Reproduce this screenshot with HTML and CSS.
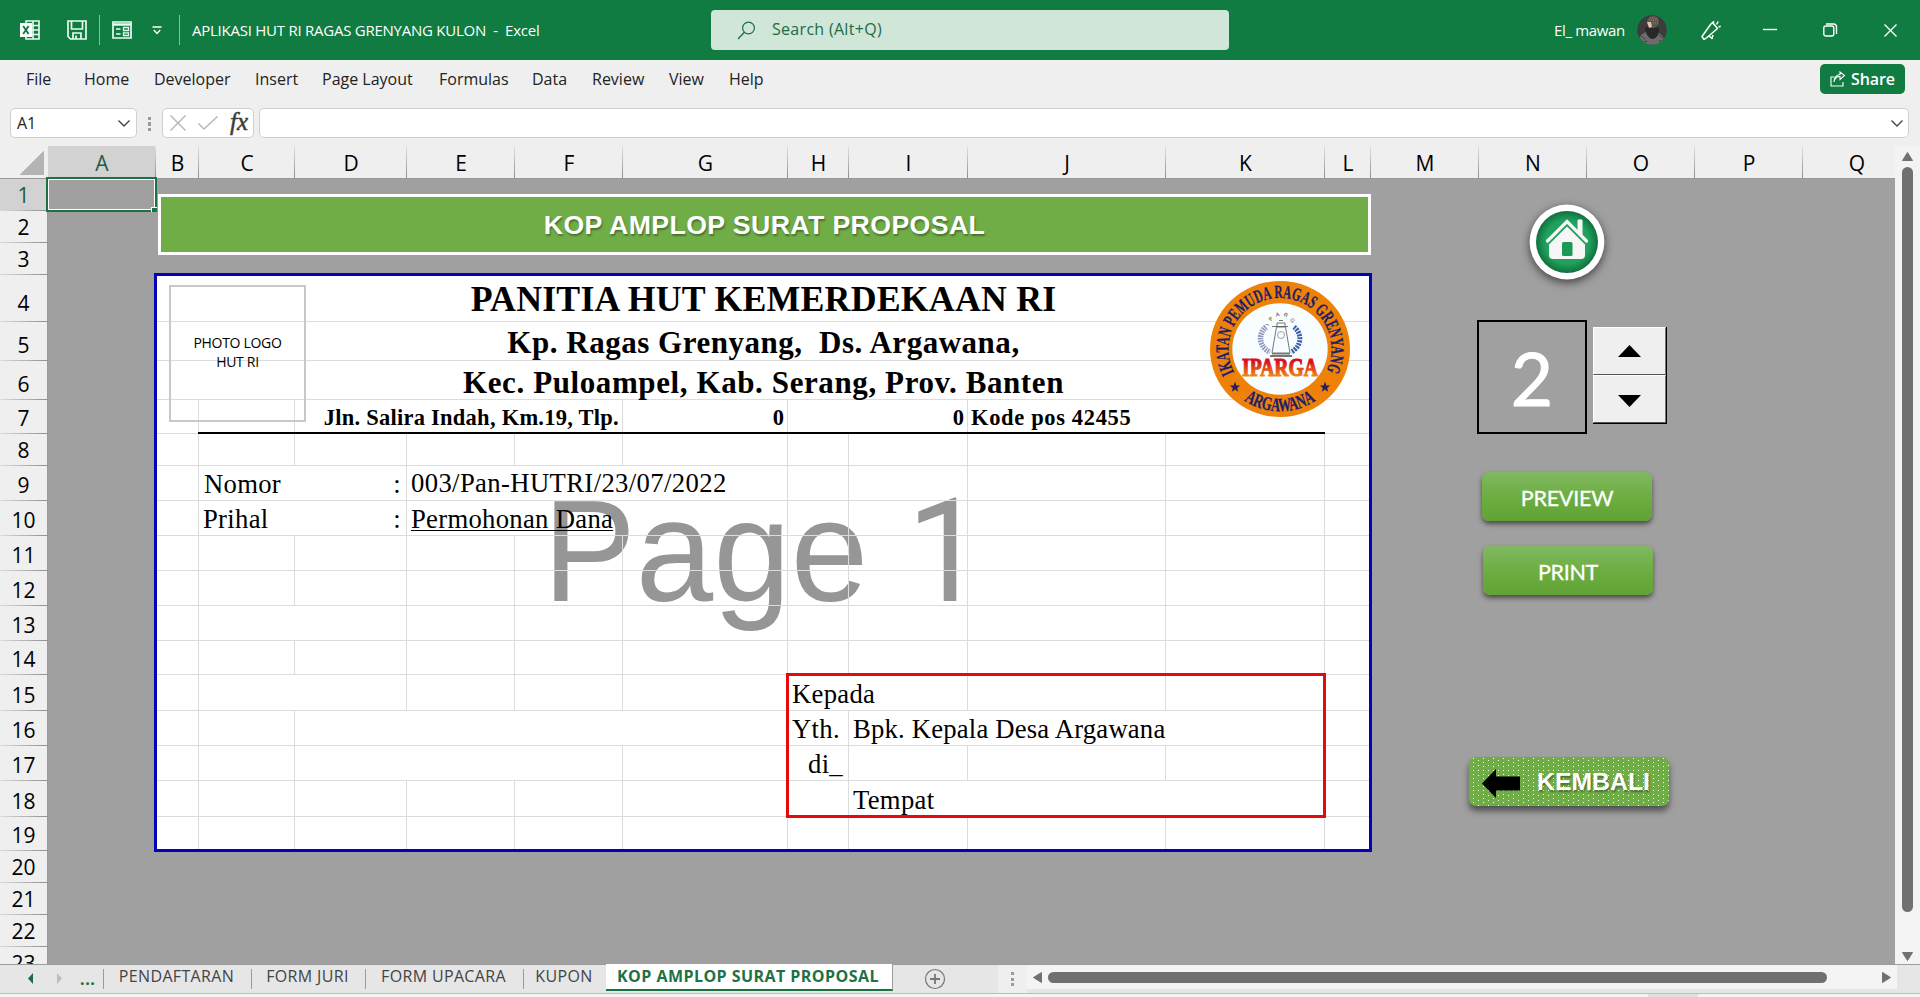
FILE: index.html
```html
<!DOCTYPE html>
<html lang="id">
<head>
<meta charset="utf-8">
<title>APLIKASI HUT RI RAGAS GRENYANG KULON - Excel</title>
<link rel="stylesheet" href="styles.css">
</head>
<body>
<div class="app">
  <header class="titlebar">
    <div class="quick">
      <svg class="ic-excel" width="20" height="20" viewBox="0 0 20 20"><path d="M6 1h13v18H6zM6 5.5h13M6 10h13M6 14.5h13M13 1v18" fill="none" stroke="#e9fbf1" stroke-width="1.6"/><rect x="0" y="3" width="12" height="14" fill="#fff"/><path d="M3.2 6l5.4 8M8.6 6l-5.4 8" stroke="#107c41" stroke-width="1.9"/></svg>
      <svg class="ic-save" width="20" height="20" viewBox="0 0 20 20"><path d="M1 1h18v18H3.5L1 16.500z M4.500 1v8h11V1 M6 19v-6h8v6 M9 15.500v3.500" fill="none" stroke="#e9fbf1" stroke-width="1.7"/></svg>
      <span class="vline"></span>
      <svg class="ic-form" width="20" height="18" viewBox="0 0 20 18"><path d="M1 1h18v16H1z" fill="none" stroke="#e9fbf1" stroke-width="1.7"/><path d="M1 3.500h18" stroke="#e9fbf1" stroke-width="2.500"/><path d="M4 8h4.500M4 13h4.500" stroke="#e9fbf1" stroke-width="1.600"/><path d="M11.500 6.500h5v3h-5zM11.500 11.800h5v2.700h-5z" fill="none" stroke="#e9fbf1" stroke-width="1.300"/></svg>
      <svg class="ic-more" width="10" height="9" viewBox="0 0 10 9"><path d="M.5 1h9M1.800 4l3.200 3.400L8.200 4" fill="none" stroke="#fff" stroke-width="1.400"/></svg>
      <span class="vline"></span>
      <span class="doc-title">APLIKASI HUT RI RAGAS GRENYANG KULON  -  Excel</span>
    </div>
    <div class="search">
      <svg width="19" height="19" viewBox="0 0 19 19"><circle cx="11.500" cy="7" r="5.900" fill="none" stroke="#1e6b43" stroke-width="1.200"/><path d="M7.400 11.300L1 18" stroke="#1e6b43" stroke-width="1.300"/></svg>
      <span>Search (Alt+Q)</span>
    </div>
    <div class="account">
      <span class="user">El_ mawan</span>
      <svg class="avatar" width="30" height="30" viewBox="0 0 30 30"><defs><clipPath id="av"><circle cx="15" cy="15" r="14.700"/></clipPath></defs><g clip-path="url(#av)"><rect width="30" height="30" fill="#3d3b3b"/><path d="M1 30c0-9 4-13 13-14 9 1 14 5 15 14z" fill="#6d6b6e"/><path d="M8 13c1 8 5 11 8 11 4-1 6-5 6-10l-5-6z" fill="#282626"/><circle cx="16" cy="7" r="6" fill="#5e564c"/><path d="M10 7l4 0 1 5-3 1z" fill="#d8c4b5"/><path d="M13 3h7M12 5h9M16 8h5" stroke="#8b8070" stroke-dasharray="1 1"/><path d="M4 21l4 3M20 19l6 4M22 26l5-1M5 27l6-1" stroke="#3a3838" stroke-dasharray="2 1"/></g></svg>
      <svg class="ic-pen" width="20" height="20" viewBox="0 0 20 20"><path d="M1 16.500L9.500 4.500 11.500 2.500 16.500 8.500 6 17.500 3 19.500zM8 16l3 2.500 1-3.500M12.500 3.500V1M15.500 4.500l1.700-3M17.500 7l2.200-.8" fill="none" stroke="#fff" stroke-width="1.500" stroke-linejoin="round"/></svg>
      <svg class="ic-min" width="14" height="14" viewBox="0 0 14 14"><path d="M0 6.500h14" stroke="#fff" stroke-width="1.400"/></svg>
      <svg class="ic-max" width="15" height="14" viewBox="0 0 15 14"><rect x=".8" y="3" width="10" height="10" rx="2" fill="none" stroke="#fff" stroke-width="1.400"/><path d="M3 1h7.500a3 3 0 0 1 3 3v7" fill="none" stroke="#fff" stroke-width="1.400"/></svg>
      <svg class="ic-close" width="13" height="13" viewBox="0 0 13 13"><path d="M.5.5l12 12M12.500.5l-12 12" stroke="#fff" stroke-width="1.400"/></svg>
    </div>
  </header>

  <nav class="ribbon">
    <div class="tabs"><span>File</span><span>Home</span><span>Developer</span><span>Insert</span><span>Page Layout</span><span>Formulas</span><span>Data</span><span>Review</span><span>View</span><span>Help</span></div>
    <button class="share"><svg width="16" height="16" viewBox="0 0 16 16"><path d="M4.500 6H1v9h12v-4M4 11c.6-3.600 3-5.500 6-5.500V8.500l4.500-4L10 1v2.500C6.500 4 4 7 4 11z" fill="none" stroke="#fff" stroke-width="1.100"/></svg>Share</button>
  </nav>

  <div class="formula">
    <div class="namebox"><span>A1</span><svg width="12" height="7" viewBox="0 0 12 7"><path d="M.5.500L6 6l5.500-5.500" fill="none" stroke="#444" stroke-width="1.400"/></svg></div>
    <span class="dots"></span>
    <div class="fx">
      <svg width="16" height="16" viewBox="0 0 16 16"><path d="M.5.500l15 15M15.500.500l-15 15" stroke="#b5b5b5" stroke-width="1.400"/></svg>
      <svg width="20" height="14" viewBox="0 0 20 14"><path d="M.5 7.500l5.500 5.500L19.500.5" fill="none" stroke="#b5b5b5" stroke-width="1.400"/></svg>
      <i>fx</i>
    </div>
    <div class="input"><svg width="12" height="7" viewBox="0 0 12 7"><path d="M.5.500L6 6l5.500-5.500" fill="none" stroke="#444" stroke-width="1.400"/></svg></div>
  </div>

  <main class="work">
    <div class="sheet">
      <div class="corner"></div>
      <div class="ch on">A</div><div class="ch">B</div><div class="ch">C</div><div class="ch">D</div><div class="ch">E</div><div class="ch">F</div><div class="ch">G</div><div class="ch">H</div><div class="ch">I</div><div class="ch">J</div><div class="ch">K</div><div class="ch">L</div><div class="ch">M</div><div class="ch">N</div><div class="ch">O</div><div class="ch">P</div><div class="ch last">Q</div>
      <div class="rh on">1</div><div class="rh">2</div><div class="rh">3</div><div class="rh tall">4</div><div class="rh">5</div><div class="rh">6</div><div class="rh">7</div><div class="rh">8</div><div class="rh">9</div><div class="rh">10</div><div class="rh">11</div><div class="rh">12</div><div class="rh">13</div><div class="rh">14</div><div class="rh">15</div><div class="rh">16</div><div class="rh">17</div><div class="rh">18</div><div class="rh">19</div><div class="rh">20</div><div class="rh">21</div><div class="rh">22</div><div class="rh">23</div>

      <div class="page"><span class="watermark">Page <b>1</b></span>
        <svg class="lines" width="1218" height="579" viewBox="154 273 1218 579"><path fill="none" stroke="#dcdcdc" d="M156 321.500H1370M156 360.500H1370M156 399.500H1370M156 433.500H1370M156 465.500H1370M156 500.500H1370M156 535.500H1370M156 570.500H1370M156 605.500H1370M156 640.500H1370M156 674.500H1370M156 710.500H1370M156 745.500H1370M156 780.500H1370M156 816.500H1370
M198.500 400V850M294.500 400V466M294.500 536V606M294.500 641V675M294.500 711V850M406.500 434V711M406.500 781V850M514.500 434V466M514.500 536V711M514.500 781V850M622.500 400V466M622.500 536V711M622.500 746V850M787.500 400V850M848.500 434V675M848.500 711V850M967.500 400V711M967.500 746V781M967.500 817V850M1165.500 434V711M1165.500 746V781M1165.500 817V850M1324.500 434V850"/></svg>
      </div>

      <div class="cell h1">PANITIA HUT KEMERDEKAAN RI</div>
      <div class="cell h2 r5">Kp. Ragas Grenyang,  Ds. Argawana,</div>
      <div class="cell h2 r6">Kec. Puloampel, Kab. Serang, Prov. Banten</div>
      <div class="cell h3 addr">Jln. Salira Indah, Km.19, Tlp.</div>
      <div class="cell h3 tel1">0</div>
      <div class="cell h3 tel2">0</div>
      <div class="cell h3 pos">Kode pos 42455</div>
      <div class="rule"></div>
      <div class="cell t nomor">Nomor</div><div class="cell t colon r9">:</div><div class="cell t val r9">003/Pan-HUTRI/23/07/2022</div>
      <div class="cell t prihal">Prihal</div><div class="cell t colon r10">:</div><div class="cell t val r10"><u>Permohonan Dana</u></div>
      <div class="redbox"></div>
      <div class="cell t kepada">Kepada</div>
      <div class="cell t yth">Yth.</div><div class="cell t bpk">Bpk. Kepala Desa Argawana</div>
      <div class="cell t di">di_</div>
      <div class="cell t tempat">Tempat</div>

      <div class="select"><i></i></div>
      <div class="banner">KOP AMPLOP SURAT PROPOSAL</div>
      <div class="photo">PHOTO LOGO<br>HUT RI</div>

      <svg class="logo" width="142" height="138" viewBox="-71 -69 142 138">
        <defs>
          <path id="arcTop" d="M-45.800 23.300A51.500 51 0 1 1 45.800 23.300"/>
          <path id="arcBot" d="M-36 51.500A64 62.500 0 0 0 36 51.500"/>
          <path id="arcMini" d="M-11-23A12.500 14 0 0 1 13-23"/>
          <linearGradient id="ipg" x1="0" y1="0" x2="0" y2="1"><stop offset=".3" stop-color="#d8101c"/><stop offset=".8" stop-color="#f08a10"/></linearGradient>
        </defs>
        <ellipse rx="70" ry="68" fill="#ee8208"/>
        <ellipse rx="47.700" ry="45.800" fill="#f8fdff"/>
        <text class="ring" font-size="18.500"><textPath href="#arcTop" textLength="207" lengthAdjust="spacingAndGlyphs">IKATAN PEMUDA RAGAS GRENYANG</textPath></text>
        <text class="ring" font-size="19"><textPath href="#arcBot" textLength="76" lengthAdjust="spacingAndGlyphs">ARGAWANA</textPath></text>
        <path d="M-45 32.500l1.300 4h4l-3.200 2.400 1.200 3.900-3.300-2.400-3.300 2.400 1.200-3.900-3.200-2.400h4z" fill="#211d6b"/>
        <path d="M45 32.500l1.300 4h4l-3.200 2.400 1.200 3.900-3.300-2.400-3.300 2.400 1.200-3.900-3.200-2.400h4z" fill="#211d6b"/>
        <text class="mini" font-size="5.500"><textPath href="#arcMini" textLength="38">IPARGA</textPath></text>
        <path d="M-14-22A16 15 0 0 0-10 3" fill="none" stroke="#8b94b8" stroke-width="5.500" stroke-dasharray="1.500 1"/>
        <path d="M14-22A16 15 0 0 1 11 3" fill="none" stroke="#3a5fa8" stroke-width="5" stroke-dasharray="2 1"/>
        <path d="M-3.500-22L-8 4M5.500-22L10 4M-3-26h8v4h-8zM-1-28.500h4M-8-22.500H8" fill="none" stroke="#555" stroke-width=".8"/>
        <circle cx="1" cy="-14" r="3.500" fill="none" stroke="#888" stroke-width=".8"/>
        <path d="M-8 4.500h18M-10 7h22" stroke="#777" stroke-width="1.800"/>
        <text x="-38" y="27" class="iparga" font-size="26" textLength="76" lengthAdjust="spacingAndGlyphs" fill="url(#ipg)">IPARGA</text>
      </svg>

      <svg class="home" width="76" height="76" viewBox="-38 -38 76 76"><defs><radialGradient id="hg"><stop offset=".7" stop-color="#21a15e"/><stop offset="1" stop-color="#10713f"/></radialGradient></defs><circle r="37.400" fill="#fff"/><circle r="31" fill="url(#hg)"/><path d="M-19.500-1L0-20.500 19.500-1" fill="none" stroke="#f6f6f6" stroke-width="3.200" stroke-linecap="round"/><path d="M10.500-22q2.500-1.500 5 0V-6l-5-5z" fill="#f6f6f6"/><path d="M0-15.500L18 2.500V13q0 4-4 4H-14q-4 0-4-4V2.500z" fill="#f6f6f6"/><rect x="-5" y="0" width="10.500" height="14" rx="1.500" fill="#1b9a57"/></svg>

      <div class="num">2</div>
      <div class="spin"><button><svg width="23" height="12" viewBox="0 0 23 12"><path d="M0 12L11.500 0 23 12z"/></svg></button><button><svg width="23" height="12" viewBox="0 0 23 12"><path d="M0 0h23L11.500 12z"/></svg></button></div>
      <button class="btn preview">PREVIEW</button>
      <button class="btn print">PRINT</button>
      <div class="back"><svg width="38" height="29" viewBox="0 0 38 29"><path d="M0 14.500L14 0v7.500h24v14H14V29z"/></svg><span>KEMBALI</span></div>
    </div>
    <div class="vscroll"><svg width="11" height="9" viewBox="0 0 11 9"><path d="M5.500.5L10.500 8.500H.5z" fill="#707070" stroke="#707070" stroke-linejoin="round"/></svg><span></span><svg width="11" height="9" viewBox="0 0 11 9"><path d="M5.500 8.500L10.500.5H.5z" fill="#707070" stroke="#707070" stroke-linejoin="round"/></svg></div>
  </main>

  <footer class="bottom">
    <div class="arrows"><svg width="5" height="11" viewBox="0 0 5 11"><path d="M5 0v11L0 5.500z" fill="#1e6b43"/></svg><svg width="5" height="11" viewBox="0 0 5 11"><path d="M0 0v11l5-5.500z" fill="#bdbdbd"/></svg><b>...</b></div>
    <div class="st w1">PENDAFTARAN</div><div class="st w2">FORM JURI</div><div class="st w3">FORM UPACARA</div><div class="st w4">KUPON</div>
    <div class="st active">KOP AMPLOP SURAT PROPOSAL</div>
    <svg class="plus" width="22" height="22" viewBox="0 0 22 22"><circle cx="11" cy="11" r="9.500" fill="none" stroke="#777" stroke-width="1.200"/><path d="M11 6v10M6 11h10" stroke="#777" stroke-width="1.800"/></svg>
    <div class="grip"><span class="dots"></span></div>
    <div class="hscroll"><svg width="9" height="11" viewBox="0 0 9 11"><path d="M.5 5.500L8.500.5v10z" fill="#707070" stroke="#707070" stroke-linejoin="round"/></svg><span></span><svg width="9" height="11" viewBox="0 0 9 11"><path d="M8.500 5.500L.5.5v10z" fill="#707070" stroke="#707070" stroke-linejoin="round"/></svg></div>
  </footer>
  <div class="status"><span></span></div>
</div>
</body>
</html>
```
FILE: styles.css
```css
* { box-sizing: border-box; }
body { margin: 0; font-family: "Open Sans", "Noto Sans", sans-serif; color: #222; }
button { font: inherit; border: 0; padding: 0; margin: 0; }
svg { display: block; flex: none; }
.app { width: 1920px; height: 997px; overflow: hidden; display: flex; flex-direction: column; background: #efefef; }

/* title bar */
.titlebar { height: 60px; flex: none; background: #107c41; color: #fff; display: flex; align-items: center; }
.quick { width: 711px; display: flex; align-items: center; padding-left: 20px; }
.ic-save { margin-left: 27px; }
.vline { width: 1px; height: 30px; background: #7fbf9c; margin-left: 12px; }
.ic-form { margin-left: 12px; }
.ic-more { margin-left: 20px; }
.ic-more + .vline { margin-left: 17px; }
.doc-title { margin-left: 12px; font-size: 15px; letter-spacing: -0.25px; white-space: pre; }
.search { width: 518px; height: 40px; border-radius: 4px; background: #cfe6d9; color: #1e6b43; display: flex; align-items: center; padding-left: 26px; gap: 16px; font-size: 16px; letter-spacing: 0.3px; }
.search span { margin-top: -2px; }
.account { flex: 1; display: flex; align-items: center; padding-left: 325px; font-size: 15px; }
.user { width: 83px; white-space: nowrap; letter-spacing: -0.35px; }
.ic-pen { margin-left: 34px; }
.ic-min { margin-left: 42px; }
.ic-max { margin-left: 46px; }
.ic-close { margin-left: 46px; }

/* ribbon */
.ribbon { height: 48px; flex: none; display: flex; justify-content: space-between; padding: 4px 15px 0 26px; }
.tabs { display: grid; grid-template-columns: 58px 70px 101px 67px 117px 93px 60px 77px 60px 60px; font-size: 16px; line-height: 30px; white-space: nowrap; }
.share { width: 85px; height: 30px; background: #107c41; color: #fff; border-radius: 5px; display: flex; align-items: center; justify-content: center; gap: 5px; font-size: 16px; font-weight: 600; letter-spacing: -0.1px; }

/* formula bar */
.formula { height: 38px; flex: none; display: flex; align-items: flex-start; padding-left: 10px; }
.namebox, .fx, .input { height: 30px; background: #fff; border: 1px solid #cfcfcf; border-radius: 5px; display: flex; align-items: center; }
.namebox { width: 127px; justify-content: space-between; padding: 0 6px; font-size: 16px; }
.dots { width: 3px; height: 14px; margin: 9px 11px 0 11px; background: repeating-linear-gradient(#9b9b9b 0 3px, transparent 3px 5.500px); }
.fx { width: 92px; padding: 0 5px 0 7px; justify-content: space-between; }
.fx i { font: italic 25px/22px "Liberation Serif", serif; color: #3c3c3c; -webkit-text-stroke: .5px #3c3c3c; margin-top: -3px; width: 18px; }
.input { width: 1650px; margin-left: 5px; justify-content: flex-end; padding-right: 5px; }

/* worksheet */
.work { height: 818px; flex: none; display: flex; }
.sheet { position: relative; width: 1895px; height: 818px; overflow: hidden; background: #a0a0a0; display: grid;
  grid-template-columns: 48px 108px 43px 96px 112px 108px 108px 165px 61px 119px 198px 159px 46px 108px 108px 108px 108px 92px;
  grid-template-rows: 33px 32px 32px 32px 47px 39px 39px 34px 32px 35px 35px 35px 35px 35px 34px 36px 35px 35px 36px 34px 32px 32px 32px 32px; }
.corner { grid-area: 1 / 1; background: linear-gradient(#999, #999) 0 100% / 100% 1px no-repeat, #efefef; }
.corner::after { content: ""; display: block; width: 25px; height: 25px; margin: 4px 0 0 19px; background: linear-gradient(135deg, transparent 50%, #b4b4b4 50%); }
.ch { grid-row: 1; text-align: center; font-size: 21px; line-height: 34px; color: #000; border-bottom: 1px solid #999;
  background: linear-gradient(#e2e2e2, #8f8f8f) 100% 0 / 1px 100% no-repeat, #efefef; }
.ch.on { background-color: #d2d2d2; color: #1f5c3f; }
.ch.last { padding-left: 16px; background: #efefef; }
.rh { grid-column: 1; display: flex; align-items: flex-end; justify-content: center; font-size: 21px; line-height: 28px; color: #000; padding-bottom: 2px;
  background: linear-gradient(90deg, #dcdcdc, #8f8f8f) 0 100% / 100% 1px no-repeat, #efefef; border-right: 1px solid #999; }
.rh.on { background-color: #d2d2d2; color: #1f5c3f; }
.rh.tall { padding-bottom: 5px; }
.page { grid-area: 5 / 3 / 21 / 14; margin: -2px -1px -1px -2px; position: relative; background: #fff; overflow: hidden; }
.page::after { content: ""; position: absolute; inset: 0; border: 3px solid #0303b4; }
.lines { position: absolute; left: 0; top: 0; }
.watermark { position: absolute; left: 389px; top: 198px; font: 145px/160px "Liberation Sans", Arial, sans-serif; color: #969696; white-space: pre; transform: scaleX(.96); transform-origin: 0 0; }
.watermark b { font-family: Roboto, sans-serif; font-weight: 400; }

.cell { position: relative; align-self: end; white-space: pre; color: #000; font-family: "Liberation Serif", "Times New Roman", serif; line-height: 30px; }
.h1 { grid-area: 5 / 3 / 6 / 14; text-align: center; font-size: 35.800px; font-weight: bold; padding-bottom: 8px; letter-spacing: .2px; }
.h2 { font-size: 31px; font-weight: bold; letter-spacing: .52px; text-align: center; grid-column: 3 / 14; padding-bottom: 3px; }
.r5 { grid-row: 6; }
.r6 { grid-row: 7; letter-spacing: .6px; padding-bottom: 2px; }
.h3 { grid-row: 8; font-size: 22.500px; font-weight: bold; padding-bottom: 1px; }
.addr { grid-column: 5 / 8; text-align: right; padding-right: 4px; letter-spacing: .25px; }
.tel1 { grid-column: 8; text-align: right; padding-right: 4px; }
.tel2 { grid-column: 9 / 11; text-align: right; padding-right: 4px; }
.pos { grid-column: 11; padding-left: 3px; letter-spacing: .65px; }
.rule { grid-area: 8 / 4 / 9 / 13; align-self: end; height: 2px; margin-left: -1px; background: #000; position: relative; }
.t { font-size: 26.670px; letter-spacing: .3px; padding-bottom: 2px; }
.nomor { grid-area: 10 / 4 / 11 / 6; padding-left: 5px; }
.prihal { grid-area: 11 / 4 / 12 / 6; padding-left: 4px; }
.colon { grid-column: 5; text-align: right; padding-right: 6px; }
.val { grid-column: 6 / 9; padding-left: 4px; }
.t.r9 { grid-row: 10; }
.val.r9 { letter-spacing: .38px; padding-bottom: 3px; }
.t.r10 { grid-row: 11; }
.val u { text-decoration-thickness: 1px; text-underline-offset: 2px; }
.redbox { grid-area: 16 / 9 / 20 / 13; margin: -2px -1px -1px -2px; border: 3px solid #e60a0a; position: relative; }
.kepada { grid-area: 16 / 9 / 17 / 11; padding-left: 4px; }
.yth { grid-area: 17 / 9; padding-left: 4px; }
.bpk { grid-area: 17 / 10 / 18 / 13; padding-left: 4px; letter-spacing: .2px; }
.di { grid-area: 18 / 9; text-align: right; padding-right: 6px; }
.tempat { grid-area: 19 / 10; padding-left: 4px; }
.select { grid-area: 2 / 2; position: relative; margin: -2px -1px -1px -2px; border: 2px solid #1e7145; outline: 1px solid #fff; outline-offset: -3px; }
.select i { position: absolute; right: -2px; bottom: -2px; width: 6px; height: 5px; background: #1e7145; border: solid #fff; border-width: 1px 0 0 1px; }

/* drawn shapes floating over the cells */
.banner { position: absolute; left: 158px; top: 48px; width: 1213px; height: 61px; border: 3px solid #fff; background: #70ad47; color: #fff; text-align: center; font: bold 26.670px/56px "Liberation Sans", Arial, sans-serif; letter-spacing: .4px; text-shadow: 1px 2px 2px rgba(0,0,0,.35); }
.photo { position: absolute; left: 169px; top: 139px; width: 137px; height: 137px; border: 2px solid #c8c8c8; display: flex; align-items: center; justify-content: center; text-align: center; font-size: 14px; line-height: 19px; color: #000; letter-spacing: -.3px; padding-bottom: 3px; }
.logo { position: absolute; left: 1209px; top: 134px; }
.ring { font-family: "Liberation Serif", serif; font-weight: bold; fill: #211d6b; stroke: #211d6b; stroke-width: .3px; }
.mini { font-family: "Liberation Sans", sans-serif; fill: #444; }
.iparga { font-family: "Liberation Serif", serif; font-weight: bold; stroke: url(#ipg); stroke-width: 1.200px; }
.home { position: absolute; left: 1529px; top: 58px; filter: drop-shadow(0 3px 5px rgba(0,0,0,.6)); }
.num { position: absolute; left: 1477px; top: 174px; width: 110px; height: 114px; border: 2px solid #000; color: #fff; text-align: center; font: 73px/112px Lato, sans-serif; -webkit-text-stroke: 1px #fff; }
.spin { position: absolute; left: 1593px; top: 181px; width: 74px; height: 97px; display: grid; grid-template-rows: 1fr 1fr; border: solid #000; border-width: 0 1px 1px 0; background: #efefef; }
.spin button { display: flex; align-items: center; justify-content: center; background: #efefef; border: 1px solid; border-color: #fff #777 #555 #fff; }
.spin button + button { padding-top: 3px; }
.btn { position: absolute; width: 170px; height: 49px; border-radius: 7px; background: linear-gradient(#81b861, #6dae42 50%, #61a235); color: #fff; font: 21.500px/53px Lato, sans-serif; -webkit-text-stroke: .3px #fff; box-shadow: 0 3px 5px rgba(0,0,0,.55); }
.preview { left: 1482px; top: 326px; letter-spacing: -.2px; }
.print { left: 1483px; top: 400px; line-height: 52px; letter-spacing: -.3px; }
.back { position: absolute; left: 1469px; top: 611px; width: 200px; height: 49px; border-radius: 7px; display: flex; align-items: center; padding-left: 13px; gap: 17px; color: #fff; font: bold 24.800px/49px "Liberation Sans", Arial, sans-serif; text-shadow: 1px 2px 2px rgba(0,0,0,.35); box-shadow: 0 5px 6px rgba(0,0,0,.5);
  background: radial-gradient(circle at 4.500px 1.500px, #fff 0.800px, transparent 1px) 0 0 / 10px 4px, radial-gradient(circle at 9.500px 3.500px, #fff 0.800px, transparent 1px) 0 0 / 10px 5px, #70ad47; }
.back svg { margin-top: 3px; }
.back span { margin-top: -1px; }

/* scroll bars */
.vscroll { width: 25px; background: #f3f3f3; display: flex; flex-direction: column; padding: 6px 0 3px 7px; }
.vscroll span { width: 11px; height: 745px; margin: 6px 0 40px; border-radius: 6px; background: #707070; }
.bottom { height: 29px; flex: none; background: #e6e6e6; display: flex; align-items: flex-start; border-top: 1px solid #9b9b9b; font-size: 16px; }
.arrows { width: 104px; height: 28px; display: flex; padding: 8px 0 0 28px; align-items: flex-start; background: linear-gradient(#9b9b9b, #9b9b9b) 103px 4px / 1px 20px no-repeat; }
.arrows svg + svg { margin-left: 24px; }
.arrows b { color: #1e6b43; font-size: 16px; line-height: 12px; margin-left: 18px; letter-spacing: .6px; }
.st { height: 20px; margin-top: 4px; line-height: 14px; color: #444; text-align: center; white-space: nowrap; border-right: 1px solid #9b9b9b; letter-spacing: .35px; padding-right: 2px; }
.w1 { width: 148px; }
.w2 { width: 114px; }
.w3 { width: 158px; }
.w4 { width: 82px; border-right: 0; }
.active { width: 287px; height: 27px; margin-top: -1px; line-height: 24px; background: #fff; color: #1e7145; font-weight: 700; font-size: 16px; border-bottom: 2px solid #1e7145; letter-spacing: .45px; }
.plus { margin: 3px 0 0 31px; }
.grip { width: 29px; height: 28px; margin-left: 52px; background: #efefef; }
.grip .dots { display: block; margin: 7px 0 0 13px; }
.hscroll { width: 870px; height: 24px; background: #f4f4f4; display: flex; align-items: center; padding: 0 6px; }
.hscroll span { width: 779px; height: 11px; margin: 0 55px 0 6px; border-radius: 6px; background: #707070; }
.status { flex: 1; border-top: 1px solid #bdbdbd; background: #f4f4f4; }
.status span { display: block; width: 50px; height: 3px; margin-left: 1648px; background: #e0e0e0; }
```
